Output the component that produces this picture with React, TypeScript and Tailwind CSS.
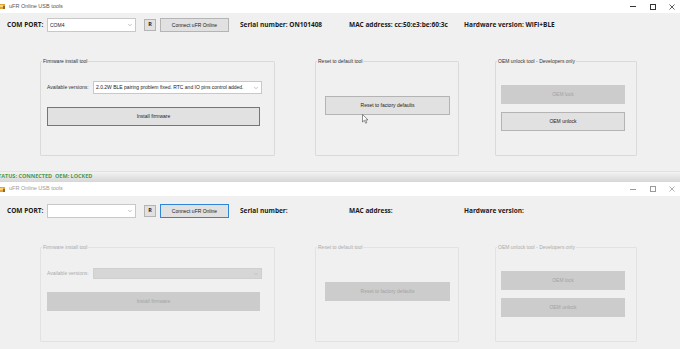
import { ChevronDown } from "lucide-react";

const sans = "font-['Liberation_Sans',Arial,sans-serif]";
const bold = "font-['Open_Sans','Liberation_Sans',sans-serif] font-bold";

function AppIcon() {
  return (
    <svg width="7" height="7" viewBox="0 0 7 7" className="ml-[-1px]">
      <rect x="0" y="1" width="6" height="5" fill="#e3a53a" />
      <rect x="1" y="2" width="3" height="2" fill="#f7d37a" />
      <rect x="4" y="3" width="2" height="3" fill="#8a6a3a" />
    </svg>
  );
}

function TitleBar({ active }: { active: boolean }) {
  const ink = active ? "#333" : "#9a9a9a";
  return (
    <div className={`flex items-center bg-white ${active ? "h-[13px]" : "h-[14px]"}`}>
      <AppIcon />
      <span className={`${sans} ml-[3px] text-[5.5px] leading-none ${active ? "text-[#555]" : "text-[#9a9a9a]"}`}>
        uFR Online USB tools
      </span>
      <div className="ml-auto flex items-center">
        <div className="w-[20px] flex justify-center">
          <div className="w-[6px] h-px" style={{ background: ink }} />
        </div>
        <div className="w-[20px] flex justify-center">
          <div className="w-[6px] h-[6px] border" style={{ borderColor: ink }} />
        </div>
        <div className="w-[17px] flex justify-center">
          <svg width="6" height="6" viewBox="0 0 6 6">
            <path d="M0.5 0.5L5.5 5.5M5.5 0.5L0.5 5.5" stroke={ink} strokeWidth="0.8" />
          </svg>
        </div>
      </div>
    </div>
  );
}

function Combo({ text, disabled, w, h }: { text?: string; disabled?: boolean; w: string; h: string }) {
  return (
    <div
      className={`${w} ${h} flex items-center border ${
        disabled ? "bg-[#d6d6d6] border-[#cfcfcf]" : "bg-white border-[#c8c8c8]"
      }`}
    >
      <span className={`${sans} flex-1 pl-[2px] text-[5px] leading-none text-[#222] whitespace-nowrap overflow-hidden`}>
        {text}
      </span>
      <ChevronDown className={`w-[6px] h-[6px] mr-[2px] ${disabled ? "text-[#b0b0b0]" : "text-[#888]"}`} strokeWidth={2} />
    </div>
  );
}

function Btn({
  label,
  disabled,
  focused,
  className,
}: {
  label: string;
  disabled?: boolean;
  focused?: boolean;
  className: string;
}) {
  return (
    <div
      className={`${className} ${sans} flex items-center justify-center text-[5px] leading-none border ${
        disabled
          ? "bg-[#cccccc] border-[#cccccc] text-[#a3a3a3]"
          : focused
          ? "bg-[#e1e1e1] border-[#2f86d6] text-[#222]"
          : "bg-[#e1e1e1] border-[#b4b4b4] text-[#222]"
      }`}
    >
      {label}
    </div>
  );
}

function Group({
  title,
  disabled,
  className,
  inner,
  children,
}: {
  title: string;
  disabled?: boolean;
  className: string;
  inner: string;
  children: React.ReactNode;
}) {
  return (
    <fieldset
      className={`${className} min-w-0 h-[98px] border rounded-[1px] ${disabled ? "border-[#e2e2e2]" : "border-[#dadada]"}`}
    >
      <legend
        className={`${sans} ml-[1px] px-[1px] text-[5px] leading-[6px] whitespace-nowrap ${
          disabled ? "text-[#ababab]" : "text-[#333]"
        }`}
      >
        {title}
      </legend>
      <div className={inner}>{children}</div>
    </fieldset>
  );
}

function Window({ connected }: { connected: boolean }) {
  const off = !connected;
  return (
    <div className="flex flex-col">
      <TitleBar active={connected} />
      <div className={`bg-[#f0f0f0] flex flex-col ${connected ? "h-[158px] pt-[5px]" : "h-[153px] pt-[8px]"}`}>
        {/* top row */}
        <div className="flex items-center h-[14px] text-[#1a1a1a]">
          <span className={`${bold} w-[47px] pl-[7px] text-[6.5px] leading-none`}>COM PORT:</span>
          <Combo text={connected ? "COM4" : ""} w="w-[89px]" h="h-[14px]" />
          <div className={`${bold} ml-[8px] w-[12px] h-[12px] flex items-center justify-center bg-[#e1e1e1] border border-[#b4b4b4] text-[5.5px] leading-none`}>
            R
          </div>
          <Btn label="Connect uFR Online" focused={off} className="ml-[4px] w-[69px] h-[14px]" />
          <span className={`${bold} ml-[11px] w-[109px] text-[6.5px] leading-none whitespace-nowrap`}>
            Serial number:{connected ? " ON101408" : ""}
          </span>
          <span className={`${bold} w-[115px] text-[6.5px] leading-none whitespace-nowrap`}>
            MAC address:{connected ? " cc:50:e3:be:60:3c" : ""}
          </span>
          <span className={`${bold} text-[6.5px] leading-none whitespace-nowrap`}>
            Hardware version:{connected ? " WiFi+BLE" : ""}
          </span>
        </div>

        {/* group boxes */}
        <div className="flex mt-[26px] ml-[40px]">
          <Group title="Firmware install tool" disabled={off} className="w-[235px]" inner="pl-[6px]">
            <div className={`flex items-center ${connected ? "mt-[17px]" : "mt-[18px]"}`}>
              <span className={`${sans} w-[46px] text-[5px] leading-none whitespace-nowrap ${off ? "text-[#ababab]" : "text-[#333]"}`}>
                Available versions:
              </span>
              <Combo
                disabled={off}
                text={connected ? "2.0.2W BLE pairing problem fixed. RTC and IO pins control added." : ""}
                w="w-[169px]"
                h={connected ? "h-[13px]" : "h-[11px]"}
              />
            </div>
            <Btn
              label="Install firmware"
              disabled={off}
              focused={connected}
              className="w-[213px] h-[19px] mt-[13px]"
            />
          </Group>

          <Group title="Reset to default tool" disabled={off} className="ml-[40px] w-[144px]" inner="pl-[9px]">
            <Btn label="Reset to factory defaults" disabled={off} className="mt-[32px] w-[125px] h-[19px]" />
          </Group>

          <Group title="OEM unlock tool - Developers only" disabled={off} className="ml-[36px] w-[142px]" inner="pl-[5px]">
            <Btn label="OEM lock" disabled className="mt-[21px] w-[124px] h-[19px]" />
            <Btn label="OEM unlock" disabled={off} className="mt-[8px] w-[124px] h-[19px]" />
          </Group>
        </div>
      </div>

      {connected && (
        <div className="h-[11px] flex items-center bg-gradient-to-b from-[#f3f3f3] to-[#d6d6d6] border-t border-[#e2e2e2] overflow-hidden">
          <span className={`${bold} -ml-[5px] text-[5.5px] leading-none text-[#4c9a4c] whitespace-nowrap`}>
            STATUS: CONNECTED&nbsp;&nbsp;OEM: LOCKED
          </span>
        </div>
      )}
    </div>
  );
}

export default function App() {
  return (
    <div className="relative w-[680px] h-[349px] overflow-hidden bg-[#f0f0f0]">
      <Window connected />
      <Window connected={false} />
      {/* mouse pointer over the reset button */}
      <svg className="absolute left-[362px] top-[114px]" width="7" height="10" viewBox="0 0 7 10">
        <path d="M0.5 0.5L0.5 8L2.3 6.3L3.6 9.2L4.8 8.7L3.6 5.9L6 5.9Z" fill="#fff" stroke="#444" strokeWidth="0.6" />
      </svg>
    </div>
  );
}
